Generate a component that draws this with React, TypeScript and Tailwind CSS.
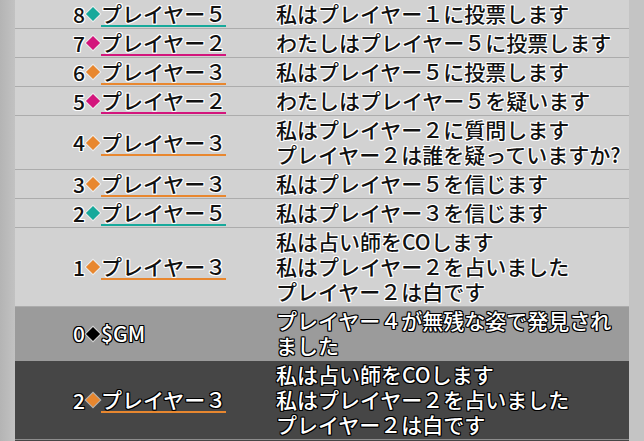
const TEAL = "#17a99b";
const PINK = "#d3157c";
const ORANGE = "#e8872f";

type Row = {
  n: number;
  color: string;
  name: string;
  lines: string[];
  tone?: "light" | "gm" | "dark";
};

const rows: Row[] = [
  { n: 8, color: TEAL, name: "プレイヤー５", lines: ["私はプレイヤー１に投票します"] },
  { n: 7, color: PINK, name: "プレイヤー２", lines: ["わたしはプレイヤー５に投票します"] },
  { n: 6, color: ORANGE, name: "プレイヤー３", lines: ["私はプレイヤー５に投票します"] },
  { n: 5, color: PINK, name: "プレイヤー２", lines: ["わたしはプレイヤー５を疑います"] },
  {
    n: 4,
    color: ORANGE,
    name: "プレイヤー３",
    lines: ["私はプレイヤー２に質問します", "プレイヤー２は誰を疑っていますか?"],
  },
  { n: 3, color: ORANGE, name: "プレイヤー３", lines: ["私はプレイヤー５を信じます"] },
  { n: 2, color: TEAL, name: "プレイヤー５", lines: ["私はプレイヤー３を信じます"] },
  {
    n: 1,
    color: ORANGE,
    name: "プレイヤー３",
    lines: ["私は占い師をCOします", "私はプレイヤー２を占いました", "プレイヤー２は白です"],
  },
  {
    n: 0,
    color: "#000000",
    name: "$GM",
    lines: ["プレイヤー４が無残な姿で発見されました"],
    tone: "gm",
  },
  {
    n: 2,
    color: ORANGE,
    name: "プレイヤー３",
    lines: ["私は占い師をCOします", "私はプレイヤー２を占いました", "プレイヤー２は白です"],
    tone: "dark",
  },
  {
    n: 1,
    color: ORANGE,
    name: "プレイヤー３",
    lines: ["私はプレイヤー２に投票します"],
    tone: "dark",
  },
];

const darkText =
  "text-[#111111] [text-shadow:1px_0_0_#fff,-1px_0_0_#fff,0_1px_0_#fff,0_-1px_0_#fff,1px_1px_0_#fff,-1px_-1px_0_#fff,1px_-1px_0_#fff,-1px_1px_0_#fff]";
const lightText =
  "text-white [text-shadow:1px_0_0_#000,-1px_0_0_#000,0_1px_0_#000,0_-1px_0_#000,1px_1px_0_#000,-1px_-1px_0_#000,1px_-1px_0_#000,-1px_1px_0_#000]";

function LogRow({ row }: { row: Row }) {
  const tone = row.tone ?? "light";
  const bg =
    tone === "dark"
      ? "bg-[#464646] border-[#8c8c8c]"
      : tone === "gm"
        ? "bg-[#9b9b9b] border-[#9b9b9b]"
        : "bg-[#d2d2d2] border-[#acacac]";
  const text = tone === "light" ? darkText : lightText;
  const isGm = row.name === "$GM";

  return (
    <div className={`flex border-b leading-[25px] ${bg} ${text}`}>
      <div className="w-[261px] shrink-0 pl-[58px] flex items-center">
        <span>{row.n}</span>
        <span
          className="w-[10px] h-[10px] rotate-45 mx-[3px] shadow-[0_0_0_1px_rgba(255,255,255,0.6)]"
          style={{ backgroundColor: row.color }}
        />
        {isGm ? (
          <span>{row.name}</span>
        ) : (
          <span
            className="inline-block leading-[24px] border-b-2"
            style={{ borderColor: row.color }}
          >
            {row.name}
          </span>
        )}
      </div>
      <div className="flex-1 pt-[1px] pb-[2px]">
        {row.lines.map((l, i) => (
          <div key={i}>{l}</div>
        ))}
      </div>
    </div>
  );
}

export default function App() {
  return (
    <div className="h-[441px] w-[644px] overflow-hidden flex bg-[#c3c3c3] font-['Noto_Sans_CJK_JP','Noto_Sans',sans-serif] font-medium text-[21px]">
      <div className="w-[15px] shrink-0 bg-gradient-to-r from-[#b4b4b4] to-[#c2c2c2]" />
      <div className="w-[614px] shrink-0 flex flex-col">
        {rows.map((r, i) => (
          <LogRow key={i} row={r} />
        ))}
      </div>
      <div className="flex-1 bg-[#c4c4c4]" />
    </div>
  );
}
